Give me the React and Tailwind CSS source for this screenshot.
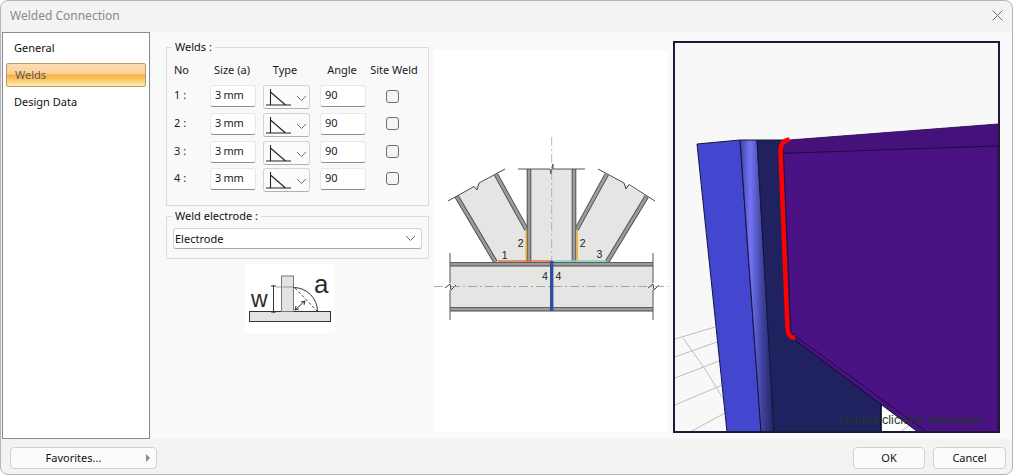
import React from 'react'

const font = { fontFamily: '"Noto Sans", "Liberation Sans", sans-serif' }

const Chevron = ({ className }) => (
  <svg className={className} width="11" height="7" viewBox="0 0 11 7" fill="none">
    <path d="M1 1l4.5 4.5L10 1" stroke="#6f6f6f" strokeWidth="1" />
  </svg>
)

const WeldSymbol = () => (
  <svg width="27" height="19" viewBox="0 0 27 19" fill="none" className="shrink-0">
    <path d="M5.5 1v16M5.5 4l15 13M1 17h25" stroke="#222" strokeWidth="1.1" />
  </svg>
)

const TextBox = ({ value, className }) => (
  <div className={`w-[46px] h-[22px] pl-[4px] bg-white rounded-[3px] border border-[#e8e8e8] border-b-[#8e8e8e] text-[11px] leading-[18px] text-[#1a1a1a] ${className}`}>
    {value}
  </div>
)

const WeldRow = ({ no, className, checkClass }) => (
  <div className={`flex items-start ${className}`}>
    <div className="w-[43px] pl-[7px] text-[11px] leading-[20px] text-[#1a1a1a]">{no} :</div>
    <TextBox value="3 mm" className="tracking-[-0.3px]" />
    <div className="ml-[7px] w-[47px] h-[24px] bg-[#fbfbfb] rounded-[3px] border border-[#d3d3d3] border-b-[#b0b0b0] flex items-center pl-[1px]">
      <WeldSymbol />
      <Chevron className="ml-[4px] mt-[3px]" />
    </div>
    <div className="ml-[10px]">
      <TextBox value="90" />
    </div>
    <div className={`ml-[20px] w-[13px] h-[13px] bg-[#f5f5f5] rounded-[3px] border border-[#6e6e6e] ${checkClass}`} />
  </div>
)

const WeldHint = () => (
  <svg width="90" height="69" viewBox="245 264 90 69" className="ml-[79px] mt-[5px] block bg-white">
    <rect x="249.5" y="311.5" width="81" height="10" fill="#e3e3e1" stroke="#333" />
    <rect x="281.5" y="276" width="12" height="35.5" fill="#e3e3e1" stroke="#777" />
    <path d="M293.5 287.5a24 24 0 0 1 24 24" fill="none" stroke="#333" />
    <path d="M295 288l22 23" fill="none" stroke="#444" strokeDasharray="3 2" />
    <path d="M295 310l10-9M295 310l4-1M295 310l1-4M305 301l-4 1M305 301l-1 4" fill="none" stroke="#333" />
    <path d="M273.5 285v28M271 286h5M271 312h5" fill="none" stroke="#333" />
    <path d="M276 287h17" fill="none" stroke="#999" />
    <text x="251" y="307" fontSize="23" fill="#2b2b2b" fontFamily="Liberation Sans">w</text>
    <text x="314" y="293" fontSize="26" fill="#2b2b2b" fontFamily="Liberation Sans">a</text>
  </svg>
)

const Flange = ({ d }) => (
  <>
    <path d={d} stroke="#4a4a4a" strokeWidth="4.6" fill="none" />
    <path d={d} stroke="#9b9b9b" strokeWidth="2.8" fill="none" />
  </>
)

// the joint drawing, in page coordinates
const JointDrawing = () => (
  <svg width="234" height="382" viewBox="434 50 234 382" className="ml-[5px] mt-[18px] bg-white shrink-0">
    <polygon points="458,196 495,262 527,262 527,230 496,174" fill="#e5e5e3" />
    <polygon points="646,196 607,262 577,262 577,230 607,174" fill="#e5e5e3" />
    <rect x="529" y="169" width="45" height="93" fill="#e5e5e3" />
    <rect x="450" y="264" width="203" height="45" fill="#e5e5e3" />
    <Flange d="M456.7 196.5L495.5 262" />
    <Flange d="M496 174.5L526.5 229.5" />
    <Flange d="M646.7 196.5L607 262" />
    <Flange d="M606.7 174.5L576.5 229.5" />
    <Flange d="M529 169V262" />
    <Flange d="M574 169V262" />
    <Flange d="M450 264.2H653" />
    <Flange d="M450 309.2H653" />
    <path d="M448 201L474 186.500L477 190L479 183L505 169" fill="none" stroke="#333" strokeWidth="0.9" />
    <path d="M598 169L624 183L626 189L629 184.500L655 201" fill="none" stroke="#333" strokeWidth="0.9" />
    <path d="M518 169H550L551 174L553 164L553 169H585" fill="none" stroke="#444" strokeWidth="0.9" />
    <path d="M450 253V283M450 290V320M653 253V283M653 290V320" fill="none" stroke="#555" strokeWidth="1" />
    <path d="M445 288L450 284L451 290L456 285M648 288L653 284L654 290L659 285" fill="none" stroke="#333" strokeWidth="0.9" />
    <path d="M434 286.500H668" fill="none" stroke="#888" strokeWidth="0.7" strokeDasharray="9 3 2 3" />
    <path d="M551.700 137V262" fill="none" stroke="#999" strokeWidth="0.7" strokeDasharray="9 3 2 3" />
    <path d="M526.300 230V261M577 230V261" fill="none" stroke="#e6ac2e" strokeWidth="1.6" />
    <path d="M498 261H551.700" fill="none" stroke="#e2704e" strokeWidth="1.6" />
    <path d="M551.700 261H606" fill="none" stroke="#7ccfd0" strokeWidth="1.6" />
    <path d="M551.700 261V311" fill="none" stroke="#2f4f9c" strokeWidth="3.4" />
    <g fontSize="10.500" fill="#222" fontFamily="Liberation Sans" textAnchor="middle">
      <text x="504.700" y="258.500">1</text>
      <text x="520.700" y="247">2</text>
      <text x="582.700" y="247">2</text>
      <text x="599.300" y="258">3</text>
      <text x="545" y="279.500">4</text>
      <text x="558.300" y="279.500">4</text>
    </g>
  </svg>
)

// 3D view, also in page coordinates
const ModelView = () => (
  <div className="relative ml-[5px] mt-[9px] w-[327px] h-[392px] shrink-0 border-2 border-[#1b1c3a] bg-[#f8f8f8]">
    <svg width="323" height="388" viewBox="675 43 323 388" className="block">
      <defs>
        <linearGradient id="strip" x1="0" y1="0" x2="1" y2="0">
          <stop offset="0" stopColor="#3d40a8" />
          <stop offset="0.3" stopColor="#7474f5" />
          <stop offset="0.65" stopColor="#3f429f" />
          <stop offset="1" stopColor="#22235f" />
        </linearGradient>
      </defs>
      <g stroke="#bdbdb9" strokeWidth="1" fill="none">
        <path d="M675 339L715 327M675 357L717 342M675 378L719 361M675 405L722 385M690 432L725 413" />
        <path d="M683 338L705 369L724 400L727 410" />
      </g>
      <polygon points="881,403 918,432 881,432" fill="#ffffff" />
      <path d="M900 432L910 425" stroke="#bdbdb9" fill="none" />
      <polygon points="697,144 740,140 761,432 727,432" fill="#4347cf" stroke="#15153a" strokeWidth="1" />
      <polygon points="740,140 757,140 774,432 761,432" fill="url(#strip)" stroke="#15153a" strokeWidth="1" />
      <polygon points="757,140 785,140 795,340 881,403 881,432 774,432" fill="#20225f" stroke="#15153a" strokeWidth="1" />
      <path d="M881 403V432" stroke="#0f1030" strokeWidth="1.500" fill="none" />
      <polygon points="791,333 927,432 918,432 795,340" fill="#4b1284" stroke="#140a30" strokeWidth="1" />
      <path d="M789 140L998 124V432H927L791 333L783.500 153Q784 143 789 140Z" fill="#4a1285" stroke="#1c0c3c" strokeWidth="0.800" />
      <path d="M789 140L998 124V146L784 153Q784 143 789 140Z" fill="#44127a" />
      <path d="M784 153.300L998 146" stroke="#1d0b40" strokeWidth="1" fill="none" />
      <path d="M789.500 139.500Q780.500 141 780.500 151L787.500 329Q788 337 795 338" fill="none" stroke="#ff0000" strokeWidth="4.500" />
    </svg>
    <div className="absolute left-[164px] top-[369px] text-[12.500px] leading-[16px] text-[#1f372e] whitespace-nowrap" style={{ fontFamily: '"Liberation Sans", sans-serif' }}>
      Double click for fullscreen.
    </div>
  </div>
)

const App = () => {
  return (
    <div style={font} className="w-[1013px] h-[475px] flex flex-col bg-[#f3f3f3] border border-[#b5b5b5] rounded-[8px] overflow-hidden text-[#111]">
      <div className="h-[31px] shrink-0 flex items-center justify-between pl-[9px] pr-[9px] pb-[2px]">
        <span className="text-[12px] text-[#8a8a8a]">Welded Connection</span>
        <svg width="11" height="11" viewBox="0 0 11 11" fill="none">
          <path d="M.5.5l10 10M10.500.5l-10 10" stroke="#6e6e6e" strokeWidth="1" />
        </svg>
      </div>

      <div className="flex-1 flex min-h-0">
        <div className="ml-[1px] w-[148px] h-[407px] bg-white border border-[#878b96] pt-[3px] px-[3px] shrink-0 text-[11px]">
          <div className="h-[25px] mb-[2px] pl-[8px] leading-[23px]">General</div>
          <div className="h-[24px] mb-[3px] pl-[8px] leading-[22px] rounded-[2px] border border-[#b99c6c] text-[#5f5a55] bg-[linear-gradient(#fcdcb4_0%,#fdd29a_42%,#fbb143_52%,#fcc060_68%,#fde59a_90%,#fdeab8_100%)]">Welds</div>
          <div className="h-[25px] pl-[8px] leading-[23px]">Design Data</div>
        </div>

        <div className="ml-[1px] flex-1 h-[407px] bg-[#f9f9f9] flex pl-[15px]">
          <div className="w-[263px] shrink-0 pt-[7px] text-[11px]">
            <fieldset className="border border-[#dcdcdc] pb-[11px] h-[167px]">
              <legend className="ml-[5px] px-[3px] leading-[16px]">Welds :</legend>
              <div className="flex mt-[7px] mb-[7px] h-[16px] leading-[16px] text-[#1a1a1a] whitespace-nowrap">
                <div className="w-[43px] pl-[7px]">No</div>
                <div className="w-[44px] text-center">Size (a)</div>
                <div className="w-[62px] text-center">Type</div>
                <div className="w-[52px] text-center">Angle</div>
                <div className="w-[52px] text-center">Site Weld</div>
              </div>
              <WeldRow no="1" className="h-[28px]" checkClass="mt-[5px]" />
              <WeldRow no="2" className="h-[28px]" checkClass="mt-[4px]" />
              <WeldRow no="3" className="h-[27px]" checkClass="mt-[4px]" />
              <WeldRow no="4" className="h-[24px]" checkClass="mt-[4px]" />
            </fieldset>

            <fieldset className="mt-[2px] border border-[#dcdcdc] h-[51px] px-[6px]">
              <legend className="ml-[-1px] px-[3px] leading-[16px]">Weld electrode :</legend>
              <div className="mt-[4px] h-[21px] bg-white rounded-[3px] border border-[#d3d3d3] border-b-[#a8a8a8] flex items-center justify-between pl-[1px] pr-[5px]">
                <span className="mt-[1px]">Electrode</span>
                <Chevron />
              </div>
            </fieldset>

            <WeldHint />
          </div>

          <JointDrawing />
          <ModelView />
        </div>
      </div>

      <div className="h-[35px] shrink-0 flex items-start pt-[8px] pl-[9px] pr-[6px] text-[11px] text-[#111]">
        <button className="relative w-[147px] h-[22px] rounded-[4px] border border-[#d2d2d2] bg-[#fbfbfb] text-center pr-[20px]">
          Favorites...
          <span className="absolute right-[6px] top-[6px] w-0 h-0 border-y-[4px] border-y-transparent border-l-[4px] border-l-[#8a8a8a]" />
        </button>
        <button className="ml-auto w-[72px] h-[22px] rounded-[4px] border border-[#d2d2d2] bg-[#fbfbfb]">OK</button>
        <button className="ml-[8px] w-[73px] h-[22px] rounded-[4px] border border-[#d2d2d2] bg-[#fbfbfb]">Cancel</button>
      </div>
    </div>
  )
}

export default App
